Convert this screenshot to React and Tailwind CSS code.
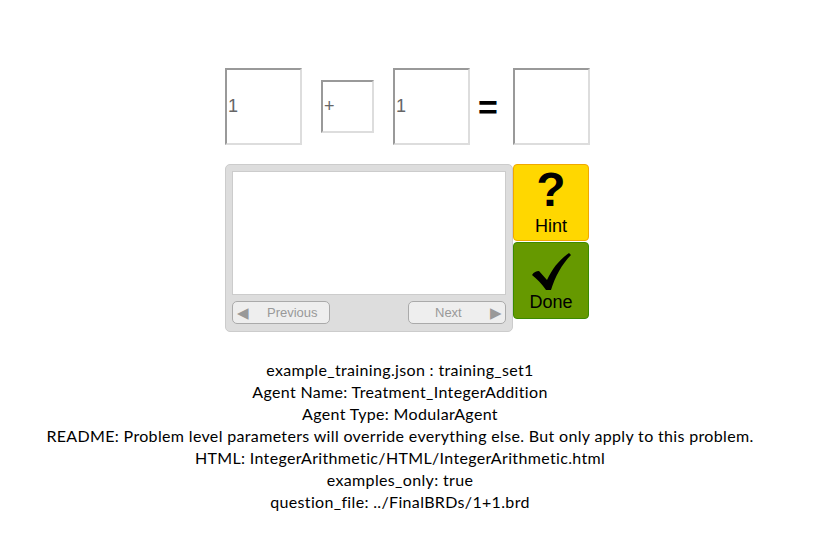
import React from "react";

const lines = [
  "example_training.json : training_set1",
  "Agent Name: Treatment_IntegerAddition",
  "Agent Type: ModularAgent",
  "README: Problem level parameters will override everything else. But only apply to this problem.",
  "HTML: IntegerArithmetic/HTML/IntegerArithmetic.html",
  "examples_only: true",
  "question_file: ../FinalBRDs/1+1.brd",
];

const Cell = ({ value, small }) => (
  <div
    className={`${small ? "w-[53px] h-[53px]" : "w-[77px] h-[77px]"} text-[18px] box-border border-2 border-t-[#999] border-l-[#999] border-b-[#ddd] border-r-[#ddd] bg-white flex items-center pl-[1px] text-[#666]`}
  >
    {value}
  </div>
);

export default function App() {
  return (
    <div className="w-[836px] h-[544px] bg-white font-['Liberation_Sans',Arial,sans-serif] overflow-hidden">
      <div className="pt-[68px] pl-[225px]">
        {/* equation row */}
        <div className="flex items-center">
          <Cell value="1" />
          <div className="ml-[19px]">
            <Cell value="+" small />
          </div>
          <div className="ml-[19px]">
            <Cell value="1" />
          </div>
          <div className="w-[43px] flex justify-start pl-[8px] text-[34px] font-bold leading-none text-black">=</div>
          <Cell value="" />
        </div>

        {/* panel + buttons */}
        <div className="flex mt-[19px]">
          <div className="w-[288px] h-[168px] box-border bg-[#ddd] border border-[#ccc] rounded-[5px] p-[6px] flex flex-col">
            <div className="h-[124px] bg-white border border-[#ccc]"></div>
            <div className="flex justify-between mt-[6px]">
              <button className="w-[98px] h-[23px] box-border border border-[#aaa] rounded-[5px] bg-[#eee] flex items-center text-[#999] text-[13px] pl-[4px]">
                <span className="text-[15px] leading-none">◀</span>
                <span className="ml-[18px]">Previous</span>
              </button>
              <button className="w-[98px] h-[23px] box-border border border-[#aaa] rounded-[5px] bg-[#eee] flex items-center justify-between text-[#999] text-[13px] pl-[26px] pr-[3px]">
                <span>Next</span>
                <span className="text-[15px] leading-none">▶</span>
              </button>
            </div>
          </div>
          <div className="flex flex-col gap-[1px]">
            <button className="w-[76px] h-[77px] box-border bg-[#ffd700] border border-[#f0a800] rounded-[4px] flex flex-col items-center text-black">
              <span className="text-[48px] font-bold leading-none mt-[1px]">?</span>
              <span className="text-[18px] leading-none mt-[3px]">Hint</span>
            </button>
            <button className="w-[76px] h-[77px] box-border bg-[#669900] border border-[#3c8a00] rounded-[4px] flex flex-col items-center text-black">
              <svg width="39" height="37" viewBox="0 0 39 37" className="mt-[10px]">
                <path d="M0 22 C2 19 4 18 7 18 L15 27 C20 16 28 6 37 0 L39 2 C30 11 23 24 19 37 L14 37 C10 31 5 26 0 22 Z" fill="#000" />
              </svg>
              <span className="text-[18px] leading-none mt-[3px]">Done</span>
            </button>
          </div>
        </div>
      </div>

      {/* info */}
      <div className="w-[800px] mt-[27px] flex flex-col items-center text-[16px] leading-[22px] tracking-[0.34px] text-black font-['Lato',sans-serif]">
        {lines.map((l) => (
          <div key={l} className="whitespace-nowrap">{l}</div>
        ))}
      </div>
    </div>
  );
}
